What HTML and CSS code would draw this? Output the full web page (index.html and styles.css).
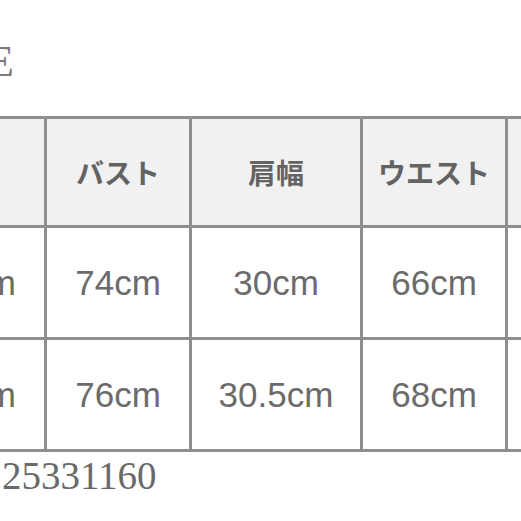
FILE: index.html
```html
<!DOCTYPE html>
<html lang="ja">
<head>
<meta charset="utf-8">
<title>SIZE</title>
<link rel="stylesheet" href="styles.css">
</head>
<body>
<div class="sheet">
  <div class="title">SIZE</div>
  <div class="size-table">
    <div class="cell head">着丈</div>
    <div class="cell head">バスト</div>
    <div class="cell head">肩幅</div>
    <div class="cell head">ウエスト</div>
    <div class="cell head">ヒップ</div>

    <div class="cell">60cm</div>
    <div class="cell">74cm</div>
    <div class="cell">30cm</div>
    <div class="cell">66cm</div>
    <div class="cell">84cm</div>

    <div class="cell">61cm</div>
    <div class="cell">76cm</div>
    <div class="cell">30.5cm</div>
    <div class="cell">68cm</div>
    <div class="cell">86cm</div>
  </div>
  <div class="code">25331160</div>
</div>
</body>
</html>
```

FILE: styles.css
```css
html, body {
  margin: 0;
  padding: 0;
  background: #ffffff;
  overflow: hidden;
  width: 521px;
  height: 521px;
}

.sheet {
  margin-left: -101px;
  padding-top: 39px;
  width: max-content;
}

.title {
  font-family: "Liberation Serif", "Times New Roman", serif;
  font-size: 45px;
  line-height: 45px;
  height: 45px;
  color: #7a7a7a;
  padding-left: 20px;
  margin-bottom: 32px;
}

.size-table {
  display: grid;
  grid-template-columns: 142px 142px 168px 142px 142px;
  grid-template-rows: 106px 109px 109px;
  gap: 3px;
  padding: 3px;
  background: #8e8e8e;
  width: max-content;
}

.cell {
  display: flex;
  align-items: center;
  justify-content: center;
  background: #ffffff;
  font-family: "Liberation Sans", Arial, "Noto Sans CJK JP", sans-serif;
  font-size: 35px;
  color: #6b6b6b;
}

.cell.head {
  background: #f1f1f1;
  font-family: "Noto Sans CJK JP", "Noto Sans", sans-serif;
  font-weight: bold;
  font-size: 28px;
  color: #636363;
}

.code {
  font-family: "Liberation Serif", "Times New Roman", serif;
  font-size: 39px;
  line-height: 39px;
  color: #6a6a6a;
  padding-left: 103px;
  margin-top: 4px;
}
```
